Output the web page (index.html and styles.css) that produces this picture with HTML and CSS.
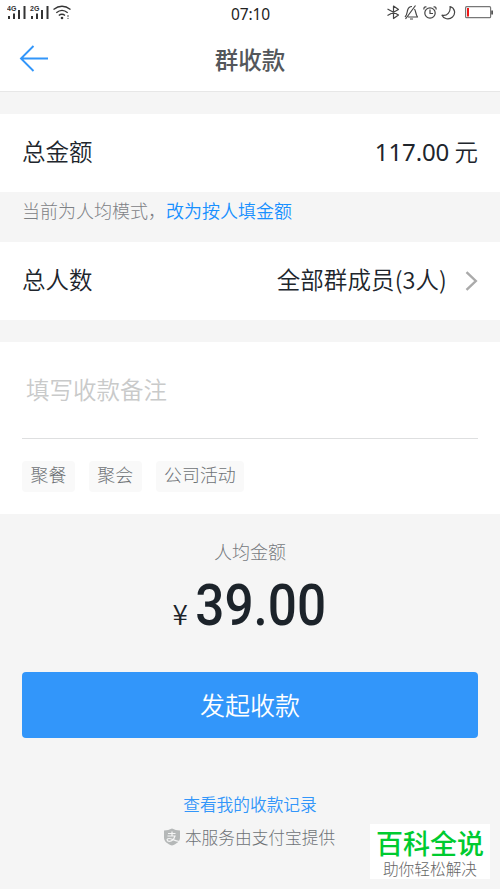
FILE: index.html
```html
<!DOCTYPE html>
<html lang="zh-CN">
<head>
<meta charset="utf-8">
<title>群收款</title>
<link rel="stylesheet" href="styles.css">
</head>
<body>
<div class="statusbar">
  <svg class="signals" width="66" height="16" viewBox="0 0 66 16">
    <g fill="#333"><path d="M1 12h2v3H1zM6 9.500h2V15H6zM11 6h2v9h-2zM16.500 2h2v13h-2zM24 12h2v3h-2zM29 9.500h2V15h-2zM34 6h2v9h-2zM39.500 2h2v13h-2z"/><circle cx="55" cy="14" r="1.300"/><circle cx="61" cy="12" r=".8"/><circle cx="61" cy="14.300" r=".6"/></g>
    <g fill="none" stroke="#333" stroke-width="1.400"><path d="M46.500 5.500Q55-1 63.500 5.500M49.300 8.700Q55 4 60.700 8.700M51.800 11.500Q55 9 58 11.500"/></g>
    <text class="net" x="0" y="6.500">4G</text><text class="net" x="23" y="6.500">2G</text>
  </svg>
  <span class="clock">07:10</span>
  <svg class="indicators" width="107" height="16" viewBox="0 0 107 16">
    <g fill="none" stroke="#444" stroke-width="1.200" stroke-linejoin="round">
      <path d="M.5 5l11 6-5 3.500V2l5 3.500L.5 11.500"/>
      <path d="M18 13c2-2 2-4 2.500-6.500.6-2.500 2-4 4.500-4M27.500 5c1.500 2 .8 5 3 8H21M18.500 15L28.500 1.500M23 15h3"/>
      <circle cx="43" cy="9" r="5.200"/><path d="M43 5.500v4h3M37 5.500c-.5-2 .8-3 2.500-2.500M49 5.500c.5-2-.8-3-2.500-2.500"/>
      <path d="M63 2.500c5 1.500 6 7 2.500 10.500-3.500 3.300-9 2-10.500-1.800 5 1.300 9-3.200 8-8.700z"/>
    </g>
    <rect x="78.600" y="2.700" width="25" height="11" rx="1" fill="none" stroke="#777" stroke-width="1.200"/>
    <path d="M80 4h2v8.500h-2z" fill="#f01818"/><path d="M104.200 6.500h1.800v4h-1.800z" fill="#555"/>
  </svg>
</div>
<header class="nav">
  <svg class="back" width="30" height="28" viewBox="0 0 30 28"><path d="M14.500 1L2 13.500l12.500 12.500M2 13.500h27" fill="none" stroke="#3296fa" stroke-width="1.900"/></svg>
  <h1>群收款</h1>
</header>
<section class="row total"><span>总金额</span><span class="amount"><span class="figure">117.00</span> 元</span></section>
<p class="mode">当前为人均模式，<a>改为按人填金额</a></p>
<section class="row people"><span>总人数</span><span class="members"><span class="who">全部群成员(3人)</span>
  <svg width="13" height="20" viewBox="0 0 13 20"><path d="M1.500 1.200L10.800 10l-9.300 8.800" fill="none" stroke="#aaa" stroke-width="2.400"/></svg></span></section>
<section class="note">
  <div class="field">填写收款备注</div>
  <div class="tags"><span>聚餐</span><span>聚会</span><span>公司活动</span></div>
</section>
<section class="summary">
  <div class="label">人均金额</div>
  <div class="price"><span class="yen">¥</span><span class="value">39.00</span></div>
  <div class="submit">发起收款</div>
  <a class="history">查看我的收款记录</a>
  <div class="provider">
    <svg width="18" height="18" viewBox="0 0 18 18"><path d="M9 .5c2.500 1.300 5 2 8 2v7c0 4-3.500 6.500-8 8-4.500-1.500-8-4-8-8v-7c3 0 5.500-.7 8-2z" fill="#b5b8b8"/><path d="M5 5.500h7.500M9 3.500v5M4.500 8h7.500c-1 3-3 5.300-5.500 5.300-3 0-3.300-2.800-.5-2.800 3 0 5 2.300 10.500 3" fill="none" stroke="#f5f5f5" stroke-width="1.200"/></svg>
    本服务由支付宝提供
  </div>
</section>
<aside class="badge"><strong>百科全说</strong><span>助你轻松解决</span></aside>
</body>
</html>
```
FILE: styles.css
```css
* { box-sizing: border-box; }
body {
  position: relative;
  width: 500px;
  height: 889px;
  margin: 0;
  overflow: hidden;
  background: #f5f5f5;
  color: #20252c;
  font-family: "Noto Sans CJK SC", sans-serif;
  font-weight: 350;
  white-space: nowrap;
}
.statusbar {
  display: grid;
  grid-template-columns: 1fr auto 1fr;
  height: 27px;
  padding: 4px 6px 0 7px;
  background: #fff;
}
.indicators { justify-self: end; }
.net { font: bold 7px "Liberation Sans", sans-serif; fill: #333; }
.clock { font: 400 15.5px/20px "Noto Sans", sans-serif; color: #222; letter-spacing: -.1px; }
.nav {
  display: grid;
  grid-template-columns: 60px 1fr 60px;
  align-items: center;
  height: 65px;
  padding: 0 20px;
  background: #fff;
  border-bottom: 1px solid #e7e7e7;
}
.nav h1 { margin: 0; font-size: 23.5px; font-weight: 500; color: #54575b; text-align: center; }
.back { margin-left: -1px; }
.row {
  display: flex;
  justify-content: space-between;
  align-items: center;
  height: 78px;
  padding: 0 22px 5px;
  background: #fff;
  font-size: 23.5px;
}
.total { margin-top: 22px; }
.figure { font-family: "Noto Sans", sans-serif; font-size: 24px; font-weight: 400; letter-spacing: -.1px; }
.mode { height: 50px; margin: 0; padding-left: 22px; font-size: 18px; line-height: 36px; font-weight: 300; color: #7d8185; }
.mode a { color: #1890ff; font-weight: 350; }
.members { display: flex; align-items: center; gap: 18px; }
.who { letter-spacing: .1px; }
.members svg { margin-top: 4px; }
.note { height: 172px; margin-top: 22px; padding: 0 22px; background: #fff; }
.field { height: 97px; padding-left: 4px; border-bottom: 1px solid #dedfe0; font-size: 23.5px; line-height: 94px; color: #c9caca; }
.tags { display: flex; gap: 14px; margin-top: 22px; }
.tags span { height: 31px; padding: 0 8.500px; border-radius: 4px; background: #f9f9f9; color: #6e7276; font-size: 17.9px; line-height: 26px; font-weight: 300; }
.summary { display: flex; flex-direction: column; align-items: center; padding: 24px 22px 0; }
.label { height: 28px; font-size: 18px; line-height: 26px; font-weight: 300; color: #75797d; }
.price { display: flex; align-items: baseline; height: 106px; margin-left: 6px; line-height: 80px; color: #1c232a; }
.yen { font-size: 28px; }
.value { font-family: Roboto, sans-serif; font-size: 57px; font-weight: 500; transform: scaleX(.9); }
.submit { width: 456px; height: 66px; border-radius: 4px; background: #3296fa; color: #fff; font-size: 25px; line-height: 65px; text-align: center; }
.history { margin-top: 53px; font-size: 16.700px; line-height: 26px; color: #3296fa; }
.provider { display: flex; align-items: center; gap: 4px; margin-top: 7px; margin-right: 2px; font-size: 16.700px; line-height: 26px; font-weight: 300; color: #6e7276; }
.badge {
  position: absolute;
  left: 370px;
  top: 824px;
  width: 120px;
  height: 55px;
  background: #fff;
  text-align: center;
}
.badge strong { display: block; font-size: 27px; line-height: 38px; font-weight: 500; color: #00cb30; }
.badge span { display: block; font-size: 15.700px; line-height: 13px; font-weight: 300; color: #666; }
```
